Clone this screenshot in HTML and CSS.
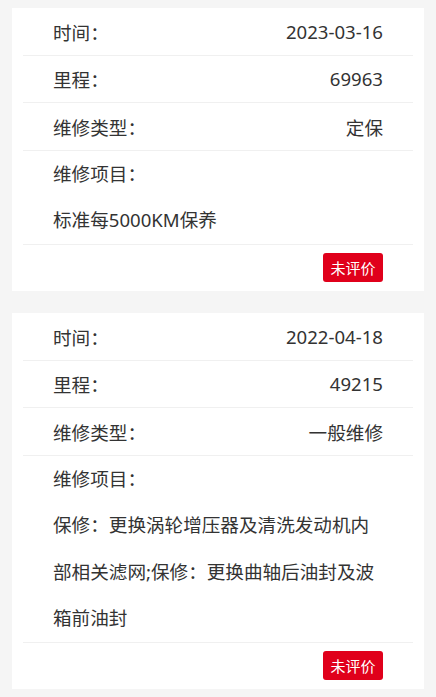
FILE: index.html
```html
<!DOCTYPE html>
<html lang="zh-CN">
<head>
<meta charset="utf-8">
<title>维修记录</title>
<link rel="stylesheet" href="styles.css">
</head>
<body>
<div class="list">
  <div class="card">
    <div class="row"><span class="label">时间：</span><span class="value">2023-03-16</span></div>
    <div class="row"><span class="label">里程：</span><span class="value">69963</span></div>
    <div class="row"><span class="label">维修类型：</span><span class="value">定保</span></div>
    <div class="block">
      <div class="block-label">维修项目：</div>
      <div class="block-text">标准每5000KM保养</div>
    </div>
    <div class="footer"><span class="btn">未评价</span></div>
  </div>
  <div class="card">
    <div class="row"><span class="label">时间：</span><span class="value">2022-04-18</span></div>
    <div class="row"><span class="label">里程：</span><span class="value">49215</span></div>
    <div class="row"><span class="label">维修类型：</span><span class="value">一般维修</span></div>
    <div class="block">
      <div class="block-label">维修项目：</div>
      <div class="block-text">保修：更换涡轮增压器及清洗发动机内部相关滤网;保修：更换曲轴后油封及波箱前油封</div>
    </div>
    <div class="footer"><span class="btn">未评价</span></div>
  </div>
</div>
</body>
</html>
```
FILE: styles.css
```css
html, body {
  margin: 0;
  padding: 0;
  background: #f5f5f5;
}
body {
  font-family: "Noto Sans", "Noto Sans CJK SC", sans-serif;
  font-size: 18.6px;
  color: #333333;
}
.list {
  display: flex;
  flex-direction: column;
  gap: 22px;
  padding: 8px 12px 10px;
}
.card {
  background: #ffffff;
  padding: 0 11px;
}
.row {
  display: flex;
  justify-content: space-between;
  align-items: center;
  height: 46.5px;
  padding: 0 30px;
  border-bottom: 1px solid #f0f0f0;
}
.block {
  border-bottom: 1px solid #f0f0f0;
  padding: 0 30px;
}
.block-label,
.block-text {
  line-height: 46.5px;
}
.footer {
  display: flex;
  justify-content: flex-end;
  align-items: center;
  height: 46.5px;
  padding: 0 30px;
}
.btn {
  display: flex;
  align-items: center;
  justify-content: center;
  width: 60px;
  height: 29px;
  background: #e0001b;
  color: #ffffff;
  font-size: 15px;
  border-radius: 3px;
}
```
